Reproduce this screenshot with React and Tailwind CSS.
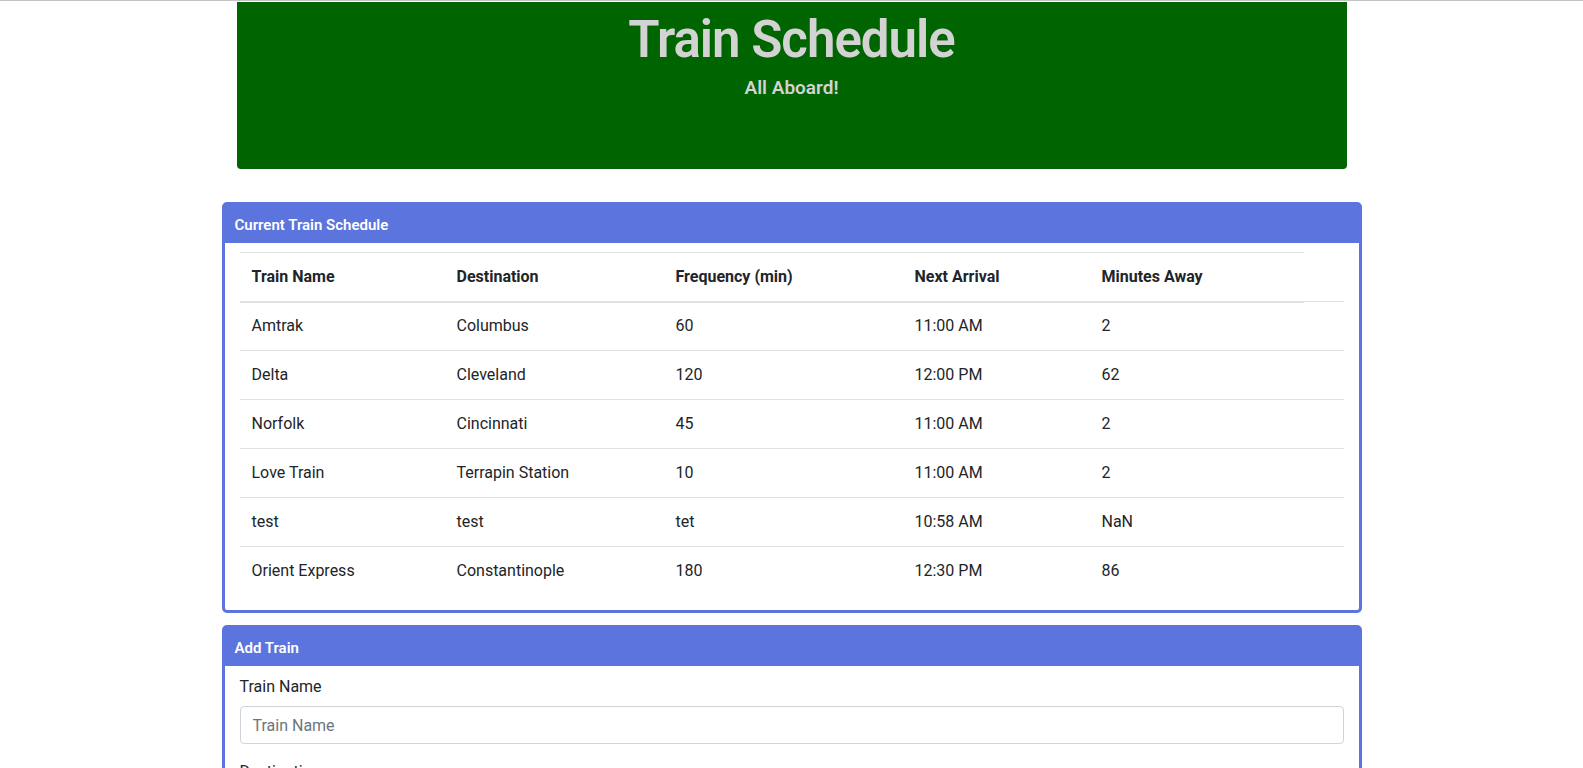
const TRAINS = [
  { name: "Amtrak", dest: "Columbus", freq: "60", next: "11:00 AM", away: "2" },
  { name: "Delta", dest: "Cleveland", freq: "120", next: "12:00 PM", away: "62" },
  { name: "Norfolk", dest: "Cincinnati", freq: "45", next: "11:00 AM", away: "2" },
  { name: "Love Train", dest: "Terrapin Station", freq: "10", next: "11:00 AM", away: "2" },
  { name: "test", dest: "test", freq: "tet", next: "10:58 AM", away: "NaN" },
  { name: "Orient Express", dest: "Constantinople", freq: "180", next: "12:30 PM", away: "86" },
];

const COLS = "grid grid-cols-[205px_219px_239px_187px_1fr]";

function Card({ title, children, className = "" }) {
  return (
    <section className={`rounded-[5px] border-[3px] border-[#5b74de] bg-white ${className}`}>
      <div className="flex h-[38px] items-center bg-[#5b74de] px-[10px] pt-[2px] text-[15px] font-semibold text-white">
        {title}
      </div>
      {children}
    </section>
  );
}

export default function App() {
  return (
    <div className="min-h-screen border-t border-[#c4c4c4] bg-white pt-px font-['Segoe_UI',Roboto,'Liberation_Sans',sans-serif] text-[#212529]">
      {/* jumbotron */}
      <header className="mx-auto flex h-[167px] w-[1110px] flex-col items-center rounded-b-[4px] bg-[#006400] pt-[7px] text-[#d3d3d3]">
        <h1 className="text-[51px] font-semibold leading-[62px] tracking-[-1px]">Train Schedule</h1>
        <p className="mt-[5px] text-[19px] font-semibold leading-6">All Aboard!</p>
      </header>

      <main className="mx-auto mt-[33px] w-[1140px]">
        <Card title="Current Train Schedule">
          <div className="px-[15px] pb-[15px] pt-[9px]">
            <div className={`${COLS} w-[1064px] border-y border-t-[#dee2e6] border-b-[#dee2e6] border-b-2 font-bold`}>
              {["Train Name", "Destination", "Frequency (min)", "Next Arrival", "Minutes Away"].map((h) => (
                <div key={h} className="px-3 py-3 leading-6">{h}</div>
              ))}
            </div>
            {TRAINS.map((t, i) => (
              <div key={t.name} className={`${COLS} border-t border-[#dee2e6] ${i === 0 ? "-mt-[2px]" : ""}`}>
                <div className="px-3 py-3 leading-6">{t.name}</div>
                <div className="px-3 py-3 leading-6">{t.dest}</div>
                <div className="px-3 py-3 leading-6">{t.freq}</div>
                <div className="px-3 py-3 leading-6">{t.next}</div>
                <div className="px-3 py-3 leading-6">{t.away}</div>
              </div>
            ))}
          </div>
        </Card>

        <Card title="Add Train" className="mt-[12px]">
          <form className="px-[15px] pb-4 pt-[9px]" onSubmit={(e) => e.preventDefault()}>
            <div className="mb-4">
              <label className="mb-[7px] block leading-6">Train Name</label>
              <input
                placeholder="Train Name"
                className="block h-[38px] w-full rounded-[4px] border border-[#ced4da] px-3 text-base placeholder:text-[#6c757d]"
              />
            </div>
            <div className="mb-4">
              <label className="mb-[7px] block leading-6">Destination</label>
              <input
                placeholder="Destination"
                className="block h-[38px] w-full rounded-[4px] border border-[#ced4da] px-3 text-base placeholder:text-[#6c757d]"
              />
            </div>
          </form>
        </Card>
      </main>
    </div>
  );
}
